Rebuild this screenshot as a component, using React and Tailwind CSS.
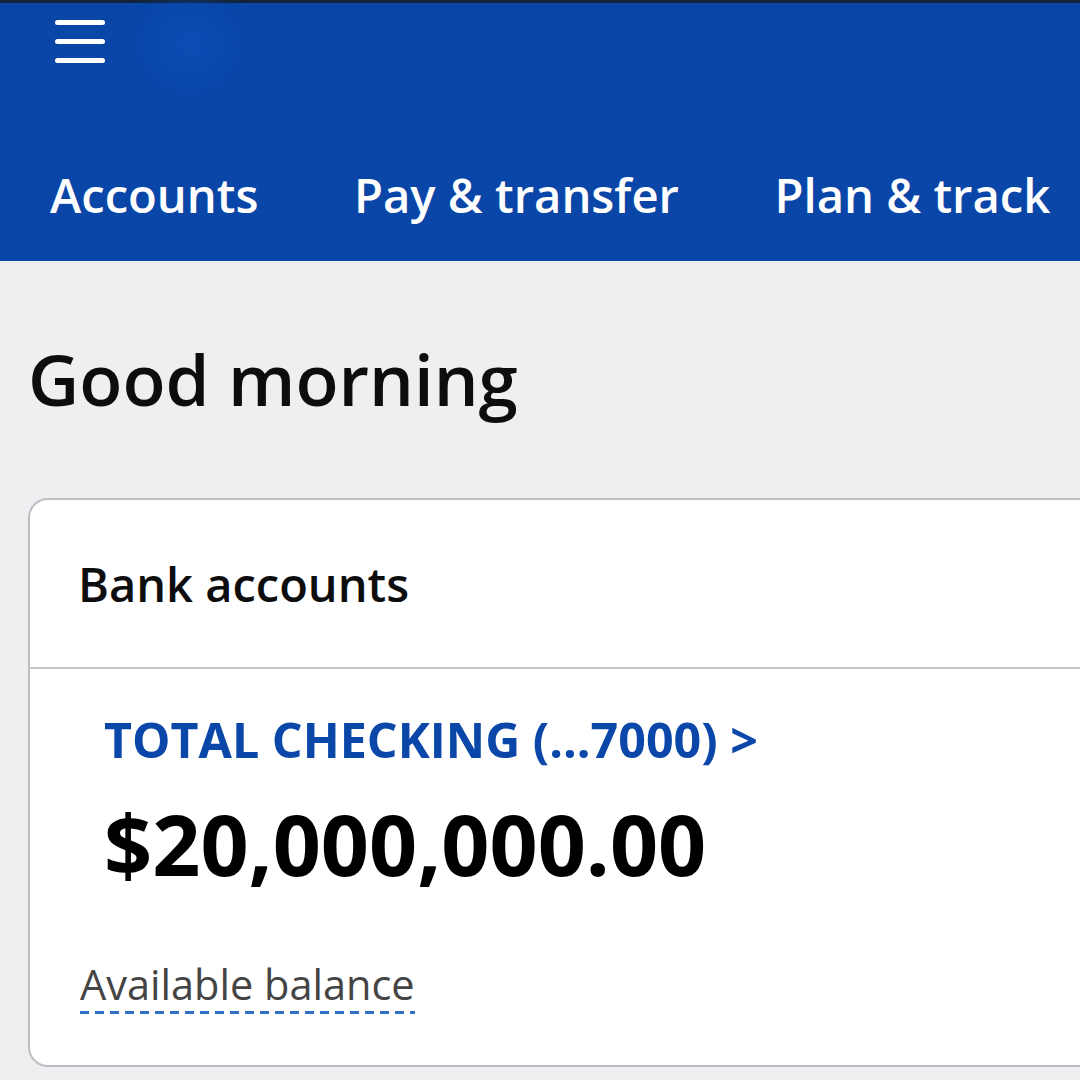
import React from "react";

const tabs = ["Accounts", "Pay & transfer", "Plan & track"];

export default function App() {
  return (
    <div className="w-[1080px] h-[1080px] overflow-hidden bg-[#eeeff1] font-['Open_Sans',sans-serif]">
      <div className="h-[3px] bg-[#14243a]" />
      <header className="relative h-[258px] bg-[#0946a8] flex flex-col">
        {/* smudged-out logo */}
        <div className="absolute left-[150px] top-[6px] w-[80px] h-[70px] rounded-full bg-[#0a4cb1] blur-[14px]" />
        <div className="relative pl-[55px] pt-[17px] flex flex-col gap-[14px]">
          <div className="w-[50px] h-[5px] rounded-full bg-white" />
          <div className="w-[50px] h-[5px] rounded-full bg-white" />
          <div className="w-[50px] h-[5px] rounded-full bg-white" />
        </div>
        <nav className="relative mt-[101px] pl-[50px] flex gap-[95.5px] whitespace-nowrap text-white text-[47.2px] leading-[62px] font-semibold">
          {tabs.map((t) => (
            <span key={t}>{t}</span>
          ))}
        </nav>
      </header>

      <main className="pl-[28px]">
        <h1 className="pt-[72px] text-[70.7px] leading-[92px] font-semibold text-[#0d0d0d] whitespace-nowrap">
          Good morning
        </h1>
        <section className="mt-[73px] w-[1100px] h-[569px] bg-white border-[2.5px] border-[#bcbec1] rounded-[20px]">
          <div className="h-[169px] border-b-2 border-[#c4c6c8] pl-[48px] pt-[54px]">
            <h2 className="text-[47px] leading-[60px] font-semibold text-[#0d0d0d]">Bank accounts</h2>
          </div>
          <div className="pl-[50px]">
            <div className="pl-[24px] pt-[39px] text-[48.4px] leading-[62px] font-bold text-[#0a47a9] whitespace-nowrap">
              TOTAL CHECKING (...7000) &gt;
            </div>
            <div className="pl-[24px] pt-[20px] text-[84.3px] leading-[108px] font-bold text-black whitespace-nowrap">
              $20,000,000.00
            </div>
            <div className="mt-[59px] inline-block text-[41.5px] leading-[54px] text-[#444]">
              Available balance
              <div className="h-[3px] bg-[repeating-linear-gradient(90deg,#2f6fc4_0_9px,transparent_9px_15px)]" />
            </div>
          </div>
        </section>
      </main>
    </div>
  );
}
